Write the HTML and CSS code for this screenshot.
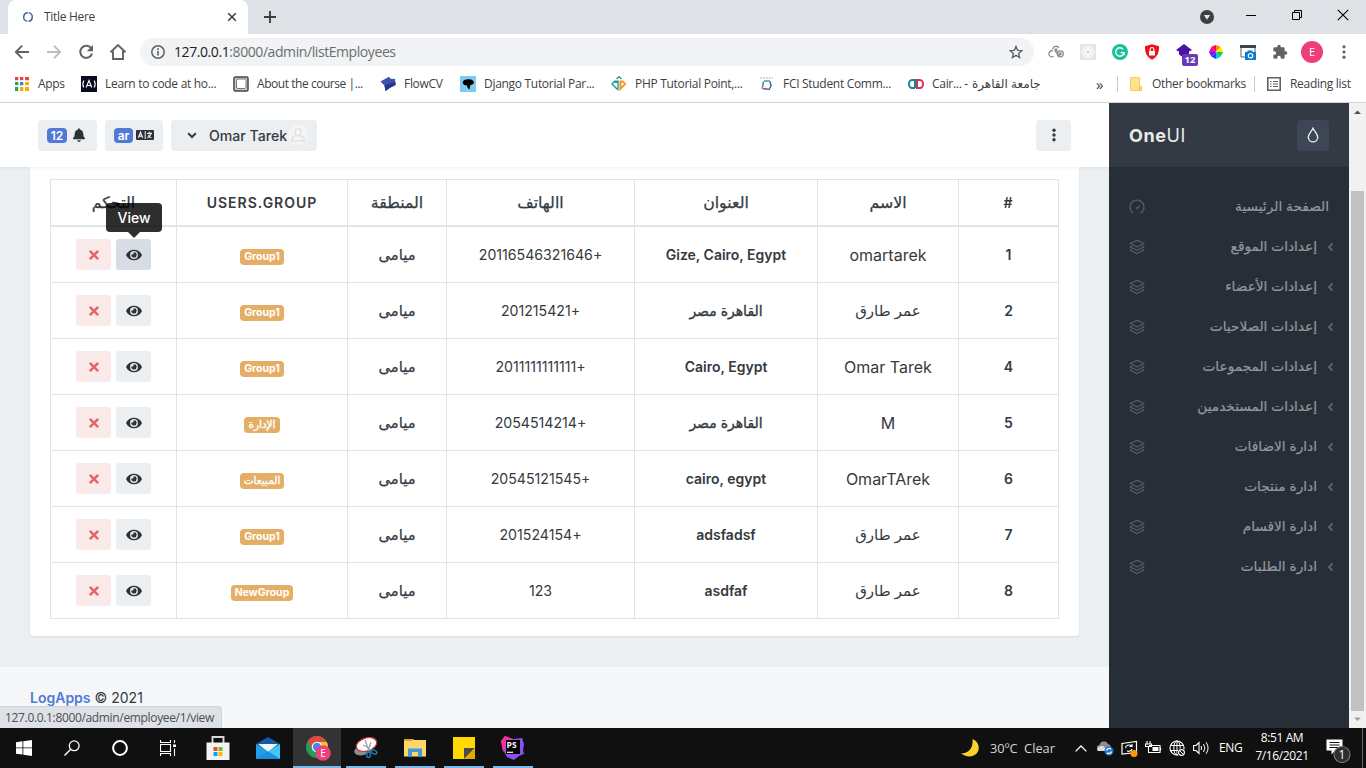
FILE: index.html
```html
<!DOCTYPE html>
<html lang="ar">
<head>
<meta charset="utf-8">
<title>Title Here</title>
<link rel="stylesheet" href="styles.css">
</head>
<body>
<svg class="defs" width="0" height="0">
  <symbol id="eye" viewBox="0 0 576 512"><path d="M572.52 241.4C518.29 135.59 410.93 64 288 64S57.68 135.64 3.48 241.41a32.35 32.35 0 0 0 0 29.19C57.71 376.41 165.07 448 288 448s230.32-71.64 284.52-177.41a32.35 32.35 0 0 0 0-29.19zM288 400a144 144 0 1 1 144-144 143.93 143.93 0 0 1-144 144zm0-240a95.31 95.31 0 0 0-25.31 3.79 47.85 47.85 0 0 1-66.9 66.9A95.78 95.78 0 1 0 288 160z"/></symbol>
  <symbol id="times" viewBox="0 0 352 512"><path d="M242.72 256l100.07-100.07c12.28-12.28 12.28-32.19 0-44.48l-22.24-22.24c-12.28-12.28-32.19-12.28-44.48 0L176 189.28 75.93 89.21c-12.28-12.28-32.19-12.28-44.48 0L9.21 111.45c-12.28 12.28-12.28 32.19 0 44.48L109.28 256 9.21 356.07c-12.28 12.28-12.28 32.19 0 44.48l22.24 22.24c12.28 12.28 32.2 12.28 44.48 0L176 322.72l100.07 100.07c12.28 12.28 32.2 12.28 44.48 0l22.24-22.24c12.28-12.28 12.28-32.19 0-44.48L242.72 256z"/></symbol>
  <symbol id="layers" viewBox="0 0 16 16"><g fill="none" stroke="currentColor" stroke-width="1.1" stroke-linejoin="round"><path d="M8 1.2 15 4.6 8 8 1 4.6z"/><path d="M2.6 7.1 1 7.9l7 3.4 7-3.4-1.6-.8"/><path d="M2.6 10.4 1 11.2l7 3.4 7-3.4-1.6-.8"/></g></symbol>
  <symbol id="angle" viewBox="0 0 8 10"><path d="M5.500 1.500 2 5l3.500 3.500" fill="none" stroke="currentColor" stroke-width="2"/></symbol>
</svg>

<div class="tabstrip">
  <div class="tab">
    <svg class="fav" viewBox="0 0 12 12"><circle cx="6" cy="6" r="4.3" fill="none" stroke="#4a66a8" stroke-width="1.5" stroke-dasharray="12 1.5" transform="rotate(-80 6 6)"/></svg>
    <span class="tab-title">Title Here</span>
    <svg class="tab-x" viewBox="0 0 10 10"><path d="M1.2 1.2l7.6 7.6M8.8 1.2 1.2 8.8" stroke="#3c4043" stroke-width="1.6"/></svg>
  </div>
  <svg class="plus" viewBox="0 0 12 12"><path d="M6 0v12M0 6h12" stroke="#3c4043" stroke-width="1.9"/></svg>
  <div class="winbtns">
    <svg width="14" height="14" viewBox="0 0 14 14"><circle cx="7" cy="7" r="7" fill="#3c4043"/><path d="M3.8 5h6.4L7 9.8z" fill="#dee1e6"/></svg>
    <svg width="10" height="10" viewBox="0 0 10 10"><path d="M0 5.5h10" stroke="#000"/></svg>
    <svg width="10" height="10" viewBox="0 0 10 10"><path d="M.5 2.5h7v7h-7zM2.5 2.5v-2h7v7h-2" fill="none" stroke="#000"/></svg>
    <svg width="12" height="12" viewBox="0 0 12 12"><path d="M.8.8l10.400 10.400M11.200.8.8 11.200" stroke="#000" stroke-width="1.1"/></svg>
  </div>
</div>

<div class="toolbar">
  <div class="nav">
    <svg width="16" height="16" viewBox="0 0 16 16"><path d="M15 8H2M8.2 1.600 1.800 8l6.400 6.400" fill="none" stroke="#5f6368" stroke-width="1.900"/></svg>
    <svg width="16" height="16" viewBox="0 0 16 16"><path d="M1 8h13M7.800 1.600 14.200 8l-6.400 6.400" fill="none" stroke="#bbbdc0" stroke-width="1.900"/></svg>
    <svg width="16" height="16" viewBox="0 0 16 16"><path d="M13.200 4.400A6 6 0 1 0 14 9.600" fill="none" stroke="#5f6368" stroke-width="2"/><path d="M15 1v6.200H8.800z" fill="#5f6368"/></svg>
    <svg width="18" height="18" viewBox="0 0 18 18"><path d="M1.500 9.300 9 2l7.500 7.300M4 8v8h10V8" fill="none" stroke="#5f6368" stroke-width="1.900"/></svg>
  </div>
  <div class="omnibox">
    <svg width="14" height="14" viewBox="0 0 14 14"><circle cx="7" cy="7" r="6.200" fill="none" stroke="#5f6368" stroke-width="1.500"/><path d="M7 6v4.500M7 3.300v1.600" stroke="#5f6368" stroke-width="1.600"/></svg>
    <span class="url"><b>127.0.0.1</b>:8000/admin/listEmployees</span>
    <svg width="14" height="14" viewBox="0 0 24 24"><path d="M12 2.400l2.800 6.700 7.200.6-5.500 4.700 1.700 7.100-6.200-3.800-6.200 3.800 1.700-7.100L2 9.700l7.200-.6z" fill="none" stroke="#5f6368" stroke-width="2.300"/></svg>
  </div>
  <div class="exts">
    <svg width="16" height="16" viewBox="0 0 16 16" fill="none" stroke="#8b8b8b" stroke-width="1.300"><path d="M4.800 5.500a3.300 3.300 0 0 1 6.200-1.500M5 7a3 3 0 1 0 .5 5.300M7 7l5 5.500"/><circle cx="12.300" cy="9.800" r="3"/><circle cx="12.300" cy="9.800" r=".8"/><circle cx="8" cy="6" r="1"/></svg>
    <svg width="16" height="16" viewBox="0 0 16 16"><path d="M0 0h16v16H0z" fill="#e4e4e4"/><g fill="none" stroke="#fff" stroke-width=".9"><ellipse cx="8" cy="8" rx="6.500" ry="2.500"/><ellipse cx="8" cy="8" rx="6.500" ry="2.500" transform="rotate(60 8 8)"/><ellipse cx="8" cy="8" rx="6.500" ry="2.500" transform="rotate(120 8 8)"/></g></svg>
    <svg width="16" height="16" viewBox="0 0 16 16"><circle cx="8" cy="8" r="8" fill="#15c39a"/><path d="M11 5.200A4.200 4.200 0 1 0 12 8.600H8.600M12 8.300v3" fill="none" stroke="#fff" stroke-width="1.400"/></svg>
    <svg width="16" height="16" viewBox="0 0 16 16"><path d="M8 .3 15 2.300c.3 6-1.500 10.500-7 13.500C2.500 12.800.7 8.300 1 2.300z" fill="#ec1515"/><path d="M5 7h6v4.500H5z" fill="#fff"/><path d="M6.200 7V5.300a1.800 1.800 0 0 1 3.600 0V7" fill="none" stroke="#fff" stroke-width="1.100"/></svg>
    <div class="ext-badged"><svg width="16" height="16" viewBox="0 0 16 16"><path d="M8 0l8 6-3 1.500v3L8 14l-5-3.500v-3L0 6z" fill="#4b11a8"/></svg><span class="ext-badge">12</span></div>
    <svg width="16" height="16" viewBox="0 0 16 16"><path d="M8 8V1l4.500 1.800z" fill="#ff8a00"/><path d="M8 8l4.500-5.200L15 8z" fill="#ffe800"/><path d="M8 8h7l-2.500 4.800z" fill="#19c837"/><path d="M8 8l4.500 4.800L8 15z" fill="#00c8e8"/><path d="M8 8v7l-4.500-2.200z" fill="#1d43ff"/><path d="M8 8l-4.500 4.800L1 8z" fill="#7d19e8"/><path d="M8 8H1l2.500-5.200z" fill="#f000d8"/><path d="M8 8 3.500 2.800 8 1z" fill="#f0102a"/></svg>
    <svg width="16" height="16" viewBox="0 0 16 16"><path d="M1 2.500h14V13H1z" fill="#fff" stroke="#50646e"/><path d="M0 1h16v3H0z" fill="#37474f"/><path d="M5 8h2l1-1.500h4L13 8h3v8H5z" fill="#0a7bd0"/><circle cx="10.500" cy="11.700" r="2.200" fill="none" stroke="#fff" stroke-width="1.200"/></svg>
    <svg width="16" height="16" viewBox="0 0 24 24"><path fill="#5f6368" d="M20.500 11H19V7a2 2 0 0 0-2-2h-4V3.500a2.500 2.500 0 0 0-5 0V5H4a2 2 0 0 0-2 2v3.800h1.500a2.700 2.700 0 0 1 0 5.400H2V20a2 2 0 0 0 2 2h3.800v-1.500a2.700 2.700 0 0 1 5.400 0V22H17a2 2 0 0 0 2-2v-4h1.500a2.500 2.500 0 0 0 0-5z"/></svg>
    <span class="avatar">E</span>
    <svg width="4" height="16" viewBox="0 0 4 16" fill="#5f6368"><circle cx="2" cy="2.800" r="1.600"/><circle cx="2" cy="8" r="1.600"/><circle cx="2" cy="13.200" r="1.600"/></svg>
  </div>
</div>

<div class="bookmarks">
  <svg viewBox="0 0 16 16"><path fill="#ea4335" d="M1 1h4v4H1zM6 1h4v4H6zM11 1h4v4h-4z"/><path fill="#34a050" d="M1 6h4v4H1zM1 11h4v4H1z"/><path fill="#1e88e5" d="M6 6h4v4H6z"/><path fill="#f9ab00" d="M11 6h4v4h-4zM6 11h4v4H6zM11 11h4v4h-4z"/><path d="M5 0v16M10 0v16M0 5h16M0 10h16" stroke="#fff" stroke-width="1.400"/></svg>
  <span>Apps</span>
  <svg viewBox="0 0 16 16"><path d="M0 0h16v16H0z" fill="#0a0a23"/><path d="M2.800 4.500Q.8 8 2.800 11.500M13.200 4.500q2 3.500 0 7M5.200 11.500 8 4.500l2.800 7M6.500 9.300l3 .4" fill="none" stroke="#fff" stroke-width="1.100"/></svg>
  <span>Learn to code at ho...</span>
  <svg viewBox="0 0 16 16"><rect x="1" y="1" width="14" height="14" rx="1.500" fill="#ccc" stroke="#444" stroke-width="1.500"/><rect x="3.500" y="3" width="9.500" height="9.500" rx="1.500" fill="#fff" stroke="#777"/></svg>
  <span class="tight">About the course |...</span>
  <svg viewBox="0 0 16 16"><path d="M.5 5.500 9 .8l1.500 2L15 3l.5 6-5 2.500L5.500 15 4.500 9.500z" fill="#3f51a8"/><path d="M4.500 9.500 15.500 6v3l-5 2.500L5.500 15z" fill="#27348b"/></svg>
  <span>FlowCV</span>
  <svg viewBox="0 0 16 16"><path d="M0 0h16v16H0z" fill="#7fcdee"/><path d="M2.500 6.500C3 4 6 3 9 3.300c3 0 5 1.700 5 3.700-1 2-3 1-4 3l-.3 3.500-2-1.500L7 9.500 4 9z"/></svg>
  <span>Django Tutorial Par...</span>
  <svg viewBox="0 0 16 16"><path d="M4 5 1 8l5.500 5.500M5.500 3 8 .8 10.500 3" fill="none" stroke="#209c98" stroke-width="1.500"/><path d="M3.500 4.500h4.200V15L6.300 13.500V7H3.500z" fill="#209c98"/><path d="M12 4.500H8.500V15L15.500 8zM10.500 6.500h1L13 8l-2.500 2.500z" fill="#f7941e" fill-rule="evenodd"/></svg>
  <span>PHP Tutorial Point,...</span>
  <svg viewBox="0 0 16 16" fill="none"><path d="M1 2h13" stroke="#a5afbe" stroke-dasharray="2 1"/><path d="M5 5h6" stroke="#4da080" stroke-width="1.500"/><path d="M4.500 5.500 3.500 11" stroke="#3f8fa5" stroke-width="1.500"/><path d="M5 12.500 10 13.500 12 10 11 5.500" stroke="#46679c" stroke-width="1.500"/><path d="M2.500 11.500l3 2" stroke="#d65358" stroke-width="1.500"/></svg>
  <span>FCI Student Comm...</span>
  <svg viewBox="0 0 16 16" fill="none" stroke-width="2"><path d="M7 12V4H4a3 4 0 0 0 0 8h3" stroke="#13899b"/><path d="M9 12V4h3a3 4 0 0 1 0 8H9z" stroke="#d5335b"/></svg>
  <span class="bm-cairo" dir="ltr"><i>Cair... - </i><bdi>جامعة القاهرة</bdi></span>
  <span class="more">»</span>
  <i class="sep"></i>
  <svg class="folder" viewBox="0 0 12 16"><path d="M.5 1.500h9v9h2v4H.5z" fill="#ffe28a" stroke="#f2cd5e"/><path d="M9.500 10.500v4" stroke="#e8b93c"/></svg>
  <span class="flush">Other bookmarks</span>
  <i class="sep"></i>
  <svg class="reading" viewBox="0 0 14 14"><path d="M.8.800h12.400v12.400H.8z" fill="none" stroke="#5f6368" stroke-width="1.600"/><path d="M3 4.500h1.500M3 7h1.500M3 9.500h1.500M6 4.500h5M6 7h5M6 9.500h5" stroke="#5f6368" stroke-width="1.200"/></svg>
  <span class="flush">Reading list</span>
</div>

<div class="page">
  <main class="main">
    <header class="topbar">
      <div class="btn"><span class="pill">12</span><svg width="12" height="14" viewBox="0 0 448 512"><path fill="#2d3238" d="M224 512c35.320 0 63.970-28.650 63.970-64H160.030c0 35.350 28.650 64 63.970 64zm215.390-149.710c-19.320-20.760-55.470-51.990-55.470-154.290 0-77.700-54.480-139.900-127.940-155.160V32c0-17.670-14.320-32-31.980-32s-31.980 14.330-31.980 32v20.840C118.560 68.100 64.080 130.300 64.080 208c0 102.300-36.150 133.530-55.470 154.290-6 6.450-8.660 14.160-8.610 21.710.11 16.400 12.980 32 32.100 32h383.800c19.120 0 32-15.600 32.100-32 .05-7.550-2.610-15.270-8.610-21.710z"/></svg></div>
      <div class="btn btn-lang"><span class="pill">ar</span><svg width="18" height="10" viewBox="0 0 18 10"><path d="M1 0h16a1 1 0 0 1 1 1v8a1 1 0 0 1-1 1H1a1 1 0 0 1-1-1V1a1 1 0 0 1 1-1z" fill="#2d3238"/><path d="M2.400 7.800 4.500 2.300l2.100 5.500M3.200 6.200h2.600M11 3.400h5M13.500 1.800v1.600M15 3.500q-1 3-3.700 4.200M12.300 5.200q1.200 1.900 3 2.500" stroke="#ebeff2" stroke-width="1.200" fill="none"/><path d="M9.200 1v8" stroke="#ebeff2"/></svg></div>
      <div class="btn btn-user"><svg width="10" height="7" viewBox="0 0 10 7"><path d="M1.200 1.200 5 5l3.800-3.800" fill="none" stroke="#343a40" stroke-width="2"/></svg><span class="uname">Omar Tarek</span><span class="uimg"><svg width="14" height="14" viewBox="0 0 14 14"><path d="M7 .8c2 0 3 1.300 3 3.200S8.800 8 7 8 4 5.900 4 4 5 .8 7 .8zM4.800 8C2 8.500.8 9.500.8 11v2h12.400v-2c0-1.500-1.200-2.500-4-3" fill="none" stroke="#dadada" stroke-width="1.100"/></svg></span></div>
      <div class="btn btn-dots"><svg width="4" height="14" viewBox="0 0 4 14" fill="#343a40"><circle cx="2" cy="2.200" r="1.700"/><circle cx="2" cy="7" r="1.700"/><circle cx="2" cy="11.800" r="1.700"/></svg></div>
    </header>
    <section class="content">
      <div class="card">
        <table dir="rtl">
          <colgroup><col class="c1"><col class="c2"><col class="c3"><col class="c4"><col class="c5"><col class="c6"><col class="c7"></colgroup>
          <thead><tr><th>#</th><th><span>الاسم</span></th><th><span>العنوان</span></th><th><span>االهاتف</span></th><th><span>المنطقة</span></th><th>USERS.GROUP</th><th><span>التحكم</span></th></tr></thead>
          <tbody>
          <tr><td class="num">1</td><td class="name">omartarek</td><td class="addr">Gize, Cairo, Egypt</td><td class="tel">+20116546321646</td><td class="area"><span>ميامى</span></td><td class="grp"><span>Group1</span></td><td><div class="acts"><div class="act view hover"><svg><use href="#eye"/></svg><span class="tip">View</span></div><div class="act del"><svg><use href="#times"/></svg></div></div></td></tr>
          <tr><td class="num">2</td><td class="name"><span class="ar">عمر طارق</span></td><td class="addr"><span class="ar">القاهرة مصر</span></td><td class="tel">+201215421</td><td class="area"><span>ميامى</span></td><td class="grp"><span>Group1</span></td><td><div class="acts"><div class="act view"><svg><use href="#eye"/></svg></div><div class="act del"><svg><use href="#times"/></svg></div></div></td></tr>
          <tr><td class="num">4</td><td class="name">Omar Tarek</td><td class="addr">Cairo, Egypt</td><td class="tel">+2011111111111</td><td class="area"><span>ميامى</span></td><td class="grp"><span>Group1</span></td><td><div class="acts"><div class="act view"><svg><use href="#eye"/></svg></div><div class="act del"><svg><use href="#times"/></svg></div></div></td></tr>
          <tr><td class="num">5</td><td class="name">M</td><td class="addr"><span class="ar">القاهرة مصر</span></td><td class="tel">+2054514214</td><td class="area"><span>ميامى</span></td><td class="grp"><span class="ar">الإدارة</span></td><td><div class="acts"><div class="act view"><svg><use href="#eye"/></svg></div><div class="act del"><svg><use href="#times"/></svg></div></div></td></tr>
          <tr><td class="num">6</td><td class="name">OmarTArek</td><td class="addr">cairo, egypt</td><td class="tel">+20545121545</td><td class="area"><span>ميامى</span></td><td class="grp"><span class="ar">المبيعات</span></td><td><div class="acts"><div class="act view"><svg><use href="#eye"/></svg></div><div class="act del"><svg><use href="#times"/></svg></div></div></td></tr>
          <tr><td class="num">7</td><td class="name"><span class="ar">عمر طارق</span></td><td class="addr">adsfadsf</td><td class="tel">+201524154</td><td class="area"><span>ميامى</span></td><td class="grp"><span>Group1</span></td><td><div class="acts"><div class="act view"><svg><use href="#eye"/></svg></div><div class="act del"><svg><use href="#times"/></svg></div></div></td></tr>
          <tr><td class="num">8</td><td class="name"><span class="ar">عمر طارق</span></td><td class="addr">asdfaf</td><td class="tel">123</td><td class="area"><span>ميامى</span></td><td class="grp"><span>NewGroup</span></td><td><div class="acts"><div class="act view"><svg><use href="#eye"/></svg></div><div class="act del"><svg><use href="#times"/></svg></div></div></td></tr>
          </tbody>
        </table>
      </div>
    </section>
    <footer class="footer"><b>LogApps</b> © 2021</footer>
    <div class="status">127.0.0.1:8000/admin/employee/1/view</div>
  </main>
  <aside class="sidebar">
    <div class="brand"><span class="logo"><b>One</b>UI</span><span class="drop"><svg width="12" height="16" viewBox="0 0 12 16"><path d="M6 1.300C7.500 4.500 10.700 7 10.700 10.200a4.700 4.700 0 0 1-9.400 0C1.300 7 4.500 4.500 6 1.300z" fill="none" stroke="#e8eaec" stroke-width="1.400"/></svg></span></div>
    <nav class="menu">
      <a class="home"><svg class="ico" viewBox="0 0 16 16"><path d="M4.200 14A7 7 0 1 1 11.800 14" fill="none" stroke="currentColor" stroke-width="1.400" stroke-dasharray="3.600 .4"/><path d="M7 9 11.500 6.500 8.300 10.200z" fill="currentColor" stroke="currentColor" stroke-width=".5"/></svg><span>الصفحة الرئيسية</span></a>
      <a><svg class="ico"><use href="#layers"/></svg><span>إعدادات الموقع</span><svg class="ang"><use href="#angle"/></svg></a>
      <a><svg class="ico"><use href="#layers"/></svg><span>إعدادات الأعضاء</span><svg class="ang"><use href="#angle"/></svg></a>
      <a><svg class="ico"><use href="#layers"/></svg><span>إعدادات الصلاحيات</span><svg class="ang"><use href="#angle"/></svg></a>
      <a><svg class="ico"><use href="#layers"/></svg><span>إعدادات المجموعات</span><svg class="ang"><use href="#angle"/></svg></a>
      <a><svg class="ico"><use href="#layers"/></svg><span>إعدادات المستخدمين</span><svg class="ang"><use href="#angle"/></svg></a>
      <a><svg class="ico"><use href="#layers"/></svg><span>ادارة الاضافات</span><svg class="ang"><use href="#angle"/></svg></a>
      <a><svg class="ico"><use href="#layers"/></svg><span>ادارة منتجات</span><svg class="ang"><use href="#angle"/></svg></a>
      <a><svg class="ico"><use href="#layers"/></svg><span>ادارة الاقسام</span><svg class="ang"><use href="#angle"/></svg></a>
      <a><svg class="ico"><use href="#layers"/></svg><span>ادارة الطلبات</span><svg class="ang"><use href="#angle"/></svg></a>
    </nav>
  </aside>
  <div class="scroll">
    <svg viewBox="0 0 17 17"><path d="M5 11h7L8.500 7.500z" fill="#505050"/></svg>
    <i class="thumb"></i>
    <svg viewBox="0 0 17 17"><path d="M5 6.500h7L8.500 10z" fill="#a0a0a0"/></svg>
  </div>
</div>

<div class="taskbar">
  <div class="apps">
    <div class="sys"><svg width="16" height="16" viewBox="0 0 16 16" fill="#fff"><path d="M0 2.200 6.500 1.300v6.200H0zM7.300 1.200 16 0v7.500H7.300zM0 8.300h6.500v6.300L0 13.700zM7.300 8.300H16V16l-8.700-1.300z"/></svg></div>
    <div class="sys"><svg width="16" height="16" viewBox="0 0 16 16"><circle cx="10.200" cy="5.800" r="4.900" fill="none" stroke="#fff" stroke-width="1.300"/><path d="M6.500 9.500.5 15.500" stroke="#fff" stroke-width="1.400"/></svg></div>
    <div class="sys"><svg width="16" height="16" viewBox="0 0 16 16"><circle cx="8" cy="8" r="6.900" fill="none" stroke="#fff" stroke-width="2"/></svg></div>
    <div class="sys"><svg width="16" height="16" viewBox="0 0 16 16" fill="none" stroke="#fff"><path d="M.5 4.500h10v7H.5zM.5 0v2.500h10V0M.5 16v-2.500h10V16M14.500 0v3M14.500 8.500V16" stroke-width="1.100"/><path d="M13 4.500h3v2.500h-3z" fill="#fff" stroke="none"/></svg></div>
    <div class="app plain"><svg width="24" height="24" viewBox="0 0 24 24"><path d="M6.500 7V1h11v6" fill="none" stroke="#d8d8d8" stroke-width="1.900"/><path d="M.5 6.500h23V24H.5z" fill="#f3f3f3"/><path d="M7.500 11h4v4h-4z" fill="#f25022"/><path d="M12.500 11h4v4h-4z" fill="#7fba00"/><path d="M7.500 16h4v4h-4z" fill="#00a4ef"/><path d="M12.500 16h4v4h-4z" fill="#ffb900"/></svg></div>
    <div class="app plain"><svg width="24" height="24" viewBox="0 0 24 24"><path d="M0 8 12 1l12 7v15H0z" fill="#0f5ba8"/><path d="M2 8h20l-10 8z" fill="#f4f4f4"/><path d="M0 8l24 15H0z" fill="#1f9fe8"/><path d="M24 8v15L12 15.500z" fill="#40c8f4"/><path d="M0 23l12-7.500L24 23z" fill="#1d8fe0"/></svg></div>
    <div class="app active"><svg width="26" height="26" viewBox="0 0 26 26"><circle cx="12" cy="12" r="11" fill="#1e9e57"/><path d="M2.500 6.500A11 11 0 0 1 21.500 6.500L12 7.200 7.300 14.500z" fill="#dc4b3e"/><path d="M12 7h9.800A11 11 0 0 1 12.500 23L16.700 14z" fill="#fbc02d"/><circle cx="12" cy="12" r="5.300" fill="#fff"/><circle cx="12" cy="12" r="4.200" fill="#4285f4"/><circle cx="18" cy="18" r="7.800" fill="#ec407a"/><text x="18" y="21.500" class="e-badge">E</text></svg></div>
    <div class="app"><svg width="24" height="24" viewBox="0 0 24 24"><ellipse cx="9" cy="14" rx="9" ry="5" fill="#8d8f92" transform="rotate(-15 9 14)"/><ellipse cx="12.500" cy="8.500" rx="10.500" ry="6.500" fill="#fff" stroke="#c63a3a" stroke-width="1.200" transform="rotate(-18 12.500 8.500)"/><path d="M11 4l4 11M17 6l-3 9M9 9l6 3" stroke="#9aa0a6" stroke-width="1.300"/><ellipse cx="14.500" cy="18.500" rx="1.900" ry="3" fill="none" stroke="#1f78b8" stroke-width="1.500"/><ellipse cx="20" cy="16" rx="3" ry="1.800" fill="none" stroke="#1f78b8" stroke-width="1.500" transform="rotate(25 20 16)"/></svg></div>
    <div class="app"><svg width="22" height="20" viewBox="0 0 22 20"><path d="M0 1h9l1 1h12v16.500H0z" fill="#ffd768"/><path d="M0 1h9l-1 2H0z" fill="#e5a21a"/><path d="M4 10.500h14v8h-4V14H8v4.500H4z" fill="#3d9be0"/></svg></div>
    <div class="app"><svg width="22" height="22" viewBox="0 0 22 22"><path d="M0 0h22v22H0z" fill="#ffd900"/><path d="M11 22V11h11z" fill="#4a4a4a"/><path d="M11 22 22 11v11z" fill="#e8a700"/></svg></div>
    <div class="app"><svg width="24" height="24" viewBox="0 0 24 24"><path d="M0 5 4 0l8 3 9-1 2 6-1 6 1 4-5 2-5 4-7-3-4-7z" fill="#8a50f0"/><path d="M0 5 4 0l8 3L5 12l-3 4z" fill="#f5319d"/><path d="M5 4h14v14H5z"/><path d="M6 16.300h6" stroke="#fff" stroke-width="1.200"/><text x="5.600" y="11.500" class="ps">PS</text></svg></div>
  </div>
  <div class="tray">
    <svg width="18" height="18" viewBox="0 0 18 18"><path d="M11.500 0C16 2 18.500 6 17.500 11 16 17 8 20 0 14.500 7 14.500 12.500 10 11.500 0z" fill="#fdd02b"/></svg>
    <span class="weather">30ºC&nbsp; Clear</span>
    <svg width="12" height="7" viewBox="0 0 12 7"><path d="M.6 6.400 6 1l5.400 5.400" fill="none" stroke="#fff" stroke-width="1.300"/></svg>
    <svg width="17" height="16" viewBox="0 0 17 16"><path d="M3 11a3 3 0 0 1-.5-6A4.500 4.500 0 0 1 11 4a3.500 3.500 0 0 1 3 3v4z" fill="#8d8d8d"/><path d="M1 11a2.500 2.500 0 0 1 1-4 4 4 0 0 1 6 1v3z" fill="#ddd"/><circle cx="12" cy="11" r="4.500" fill="#1976d2"/><path d="M9.500 10.500a2.600 2.600 0 0 1 4.500-1.200M14.500 11.500a2.600 2.600 0 0 1-4.500 1.200" stroke="#fff" stroke-width="1.300" fill="none"/></svg>
    <svg width="17" height="17" viewBox="0 0 17 17"><path d="M1 3.500 15.500 1.500v11L1 14z" fill="none" stroke="#fff" stroke-width="1.200"/><path d="M4.500 8A3.500 3 0 0 1 10.500 6M11 4v2.500H8.500M11 9a3.500 3 0 0 1-5 2" fill="none" stroke="#fff" stroke-width="1.100"/><circle cx="13" cy="13.500" r="3.500" fill="#ff9800"/></svg>
    <svg width="17" height="14" viewBox="0 0 17 14"><path d="M4 4.500h11v7H6M15.500 6.500v3" fill="none" stroke="#fff" stroke-width="1.200"/><path d="M7.500 6h6v4h-6z" fill="#fff"/><path d="M2 0v3M5 0v3M.5 3h6v2.500h-6zM3.500 5v6.500H6" fill="none" stroke="#fff" stroke-width="1.100"/></svg>
    <svg width="17" height="17" viewBox="0 0 17 17"><circle cx="8" cy="8" r="7" fill="none" stroke="#fff" stroke-width="1.200"/><ellipse cx="8" cy="8" rx="3.200" ry="7" fill="none" stroke="#fff"/><path d="M1 5.500h14M1 10.500h14M8 1v14" stroke="#fff"/><circle cx="12.500" cy="12.500" r="4" fill="#101010"/><circle cx="12.500" cy="12.500" r="2.900" fill="none" stroke="#fff" stroke-width="1.100"/><path d="M10.500 10.500l4 4" stroke="#fff"/></svg>
    <svg width="17" height="14" viewBox="0 0 17 14" fill="none" stroke="#fff"><path d="M.6 4.500H3L6 1.500v11L3 9.500H.6z" stroke-width="1.100"/><path d="M8 5q1.300 2 0 4M10.500 3q2.700 4 0 8M13 1.200q4.200 5.800 0 11.600"/></svg>
    <span class="lang">ENG</span>
    <span class="clock">8:51 AM<br>7/16/2021</span>
    <svg class="notif" width="25" height="25" viewBox="0 0 25 25"><path d="M.5 1.500h16v11H9l-3.500 4v-4h-5z" fill="#fff"/><path d="M3.500 4.500h10M3.500 7h10M3.500 9.500h10" stroke="#101010" stroke-width="1.100"/><circle cx="16" cy="16.500" r="8" fill="#2e2e2e" stroke="#777" stroke-width="1.200"/><text x="16" y="20.500" class="n-count">1</text></svg>
    <i class="desk"></i>
  </div>
</div>
</body>
</html>
```

FILE: styles.css
```css
* { box-sizing: border-box; }
body { margin: 0; width: 1366px; height: 768px; overflow: hidden; display: flex; flex-direction: column; background: #fff; font-family: "Open Sans", "Noto Sans", "DejaVu Sans", sans-serif; }
svg { display: block; flex: none; }
.defs { position: absolute; }
i { font-style: normal; }

/* Tab strip */
.tabstrip { height: 34px; flex: none; background: #dee1e6; display: flex; align-items: center; padding-left: 8px; }
.tab { width: 240px; height: 34px; background: #fff; border-radius: 8px 8px 0 0; display: flex; align-items: center; padding: 0 11px 0 14px; }
.fav { width: 12px; height: 12px; }
.tab-title { margin: -1px 0 0 10px; font-size: 12px; color: #3c4043; letter-spacing: -.3px; flex: 1; }
.tab-x { width: 10px; height: 10px; }
.plus { width: 12px; height: 12px; margin-left: 16px; }
.winbtns { margin: -4px 0 0 auto; display: grid; grid-template-columns: 46px 46px 45px 12px; align-items: center; padding-right: 17px; }
.winbtns svg:first-child { margin-top: 4px; }

/* Toolbar */
.toolbar { height: 36px; flex: none; display: flex; align-items: center; padding-right: 20px; }
.nav { display: flex; gap: 16px; padding-left: 14px; width: 140px; align-items: center; }
.nav svg:last-child { margin-left: -1px; }
.omnibox { width: 894px; height: 28px; border-radius: 14px; background: #f1f3f4; display: flex; align-items: center; padding: 0 11px; }
.url { flex: 1; margin: -1px 0 0 9px; font-size: 14px; letter-spacing: -.42px; color: #6a6e72; }
.url b { font-weight: 400; color: #202124; }
.exts { display: flex; align-items: center; gap: 16px; margin-left: 14px; }
.exts .avatar { width: 22px; height: 22px; margin: 0 -3px; border-radius: 50%; background: #ec407a; color: #fff; font-size: 11px; line-height: 22px; text-align: center; }
.exts > svg:last-child { margin-left: 6px; }
.ext-badged { position: relative; width: 16px; height: 16px; }
.ext-badge { position: absolute; left: 6px; top: 10px; width: 16px; height: 12px; border-radius: 2px; background: #673ab7; color: #fff; font-size: 9.500px; font-weight: 700; line-height: 12px; text-align: center; }

/* Bookmarks */
.bookmarks { height: 33px; flex: none; border-bottom: 1px solid #d5d7da; padding: 0 14px 4px; display: grid; grid-template-columns: 16px 51px 16px 136px 16px 131px 16px 64px 16px 135px 16px 132px 16px 133px 16px 172px 21px 11px 24px 102px 13px 23px 62px; align-items: center; white-space: nowrap; font-size: 12px; color: #3c4043; letter-spacing: -.3px; }
.bookmarks svg { width: 16px; height: 16px; }
.bookmarks span { padding-left: 8px; margin-top: -1px; }
.bookmarks .tight { letter-spacing: -.45px; }
.bookmarks .more { padding: 0; font-size: 15px; }
.sep { width: 1px; height: 16px; background: #c8cacd; }
.bookmarks .folder { width: 12px; margin-left: 2px; }
.bookmarks .reading { width: 14px; height: 14px; }
.bookmarks .flush { padding: 0; }
.bm-cairo { display: flex; gap: 4px; }

/* Page */
.page { height: 625px; flex: none; display: flex; }
.main { width: 1109px; display: flex; flex-direction: column; position: relative; font-family: Inter, "DejaVu Sans", sans-serif; color: #343a40; }
.topbar { height: 64px; flex: none; background: #fff; box-shadow: 0 1px 3px rgba(60, 70, 80, .08); padding: 0 38px; display: flex; gap: 8px; align-items: center; z-index: 1; }
.btn { height: 31px; border-radius: 4px; background: #ebeff2; display: flex; align-items: center; gap: 6px; padding: 0 9px; width: 59px; }
.pill { width: 20px; height: 15px; border-radius: 4px; background: #5179d6; color: #fff; line-height: 15px; font-size: 12px; font-weight: 600; text-align: center; }
.btn-lang { width: 58px; gap: 3px; }
.btn-lang .pill { width: 19px; }
.btn-user { width: 146px; padding: 0 8px 0 16px; gap: 0; }
.uname { margin-left: 12px; font-size: 14.100px; font-weight: 500; width: 79px; white-space: nowrap; }
.uimg { width: 20px; height: 20px; border-radius: 50%; background: #f4f4f4; display: grid; place-items: center; }
.btn-dots { width: 35px; margin-left: auto; justify-content: center; padding: 0; }
.content { height: 500px; flex: none; background: #ebeff2; padding: 0 30px; }
.card { height: 469px; background: #fff; border-radius: 0 0 4px 4px; box-shadow: 0 1px 2px rgba(60, 80, 100, .12); padding: 12px 20px 0; }
table { width: 1009px; table-layout: fixed; border-collapse: separate; border-spacing: 0; font-size: 14px; }
.c1 { width: 101px; } .c2 { width: 141px; } .c3 { width: 183px; } .c4 { width: 188px; } .c5 { width: 99px; } .c6 { width: 171px; } .c7 { width: 126px; }
th, td { padding: 0; text-align: center; vertical-align: middle; border-left: 1px solid #dfe4e8; border-bottom: 1px solid #dfe4e8; }
th:first-child, td:first-child { border-right: 1px solid #dfe4e8; }
th { height: 48px; border-top: 1px solid #dfe4e8; border-bottom-width: 2px; font-weight: 600; letter-spacing: 1px; line-height: 18px; }
th span { letter-spacing: 0; font-weight: 400; font-size: 15.800px; -webkit-text-stroke: .25px; }
td { height: 56px; line-height: 18px; }
.num, .addr { font-weight: 600; }
.name { font-size: 16px; }
.name .ar { font-size: 15px; }
.tel { font-size: 14.150px; }
.addr .ar { font-weight: 400; font-size: 14px; -webkit-text-stroke: .35px; }
.area { font-size: 14.800px; -webkit-text-stroke: .25px; }
.grp span { display: inline-block; margin-top: 4px; height: 16px; line-height: 15px; padding: 0 4px; border-radius: 4px; background: #e5ae67; color: #fff; font-size: 10.500px; font-weight: 700; vertical-align: middle; }
.grp .ar { font-weight: 400; font-size: 10.500px; -webkit-text-stroke: .35px; }
.acts { display: flex; gap: 5px; justify-content: center; }
.act { position: relative; width: 35px; height: 31px; border-radius: 3px; display: grid; place-items: center; }
.view { background: #ebeff2; fill: #2d3238; }
.view svg { width: 16px; height: 14px; }
.hover { background: #d8dde5; }
.del { background: #fae9e9; fill: #e56767; }
.del svg { width: 10px; height: 14px; }
.tip { position: absolute; left: -10px; top: -36px; width: 56px; height: 29px; border-radius: 4px; background: rgba(0, 0, 0, .82); color: #fff; font-weight: 500; font-size: 14px; line-height: 29px; }
.tip::after { content: ""; position: absolute; left: 22px; top: 29px; border: 6px solid transparent; border-top-color: rgba(0, 0, 0, .82); border-bottom: 0; }
.footer { flex: 1; background: #f6f7f9; padding: 22px 30px 0; font-size: 14px; line-height: 18px; }
.footer b { color: #5179d6; font-weight: 600; }
.status { position: absolute; left: 0; bottom: 0; width: 222px; height: 22px; background: #dee1e6; border: 1px solid #d0d3d8; border-width: 1px 1px 0 0; border-radius: 0 4px 0 0; padding-left: 5px; font: 12px/21px "Open Sans", sans-serif; letter-spacing: -.34px; color: #4b4f54; white-space: nowrap; }

/* Sidebar */
.sidebar { width: 240px; background: #272e38; font-family: Inter, "DejaVu Sans", sans-serif; }
.brand { height: 64px; background: #343a44; display: flex; justify-content: space-between; align-items: center; padding: 0 20px; }
.logo { color: #e8eaec; font-size: 18px; letter-spacing: .6px; }
.logo b { font-weight: 700; }
.drop { width: 32px; height: 31px; border-radius: 4px; background: #3c4655; display: grid; place-items: center; }
.menu { padding-top: 20px; }
.menu a { height: 40px; display: flex; align-items: center; padding: 0 14px 0 20px; color: #94989e; font-size: 13.700px; white-space: nowrap; -webkit-text-stroke: .2px; }
.menu .home { padding-right: 20px; }
.menu span { margin: -2px 0 0 auto; }
.ico { width: 16px; height: 16px; color: #5a6169; }
.ang { width: 8px; height: 10px; margin: -1px 0 0 10px; color: #5a6169; }
.scroll { width: 17px; background: #f1f1f1; display: flex; flex-direction: column; align-items: center; }
.scroll svg { width: 17px; height: 17px; }
.thumb { width: 13px; height: 520px; background: #c1c1c1; margin-top: 71px; }

/* Taskbar */
.taskbar { height: 40px; flex: none; background: #101010; display: flex; justify-content: space-between; color: #fff; }
.apps { display: flex; }
.sys { width: 48px; display: grid; place-items: center; }
.app { width: 40px; margin-left: 9px; display: grid; place-items: center; border-bottom: 2px solid #76b9ed; }
.app svg { margin-top: 1px; }
.plain { border-bottom-color: transparent; }
.sys + .app { margin-left: 6px; }
.plain + .plain { margin-left: 10px; }
.active { width: 48px; background: #333; margin: 0 -4px 0 5px; }
.active svg { margin-left: 2px; }
.e-badge { font: 10px "Open Sans", sans-serif; fill: #fff; text-anchor: middle; }
.ps { font: 700 8.500px "Open Sans", sans-serif; fill: #fff; }
.tray { display: flex; align-items: center; font-size: 12px; gap: 7px; }
.weather { width: 68px; margin: 0 10px 0 4px; font-size: 12.800px; color: #d5d5d5; white-space: nowrap; }
.tray svg:nth-of-type(2) { margin-right: 3px; }
.lang { width: 24px; letter-spacing: -.4px; margin: -1px 0 0 2px; }
.clock { width: 60px; text-align: center; line-height: 18px; letter-spacing: -.4px; margin: -2px 0 0 2px; }
.notif { margin: 4px 0 0 7px; }
.n-count { font: 12px "Open Sans", sans-serif; fill: #fff; text-anchor: middle; }
.desk { width: 1px; height: 40px; background: #666; margin: 0 3px 0 4px; }
```
